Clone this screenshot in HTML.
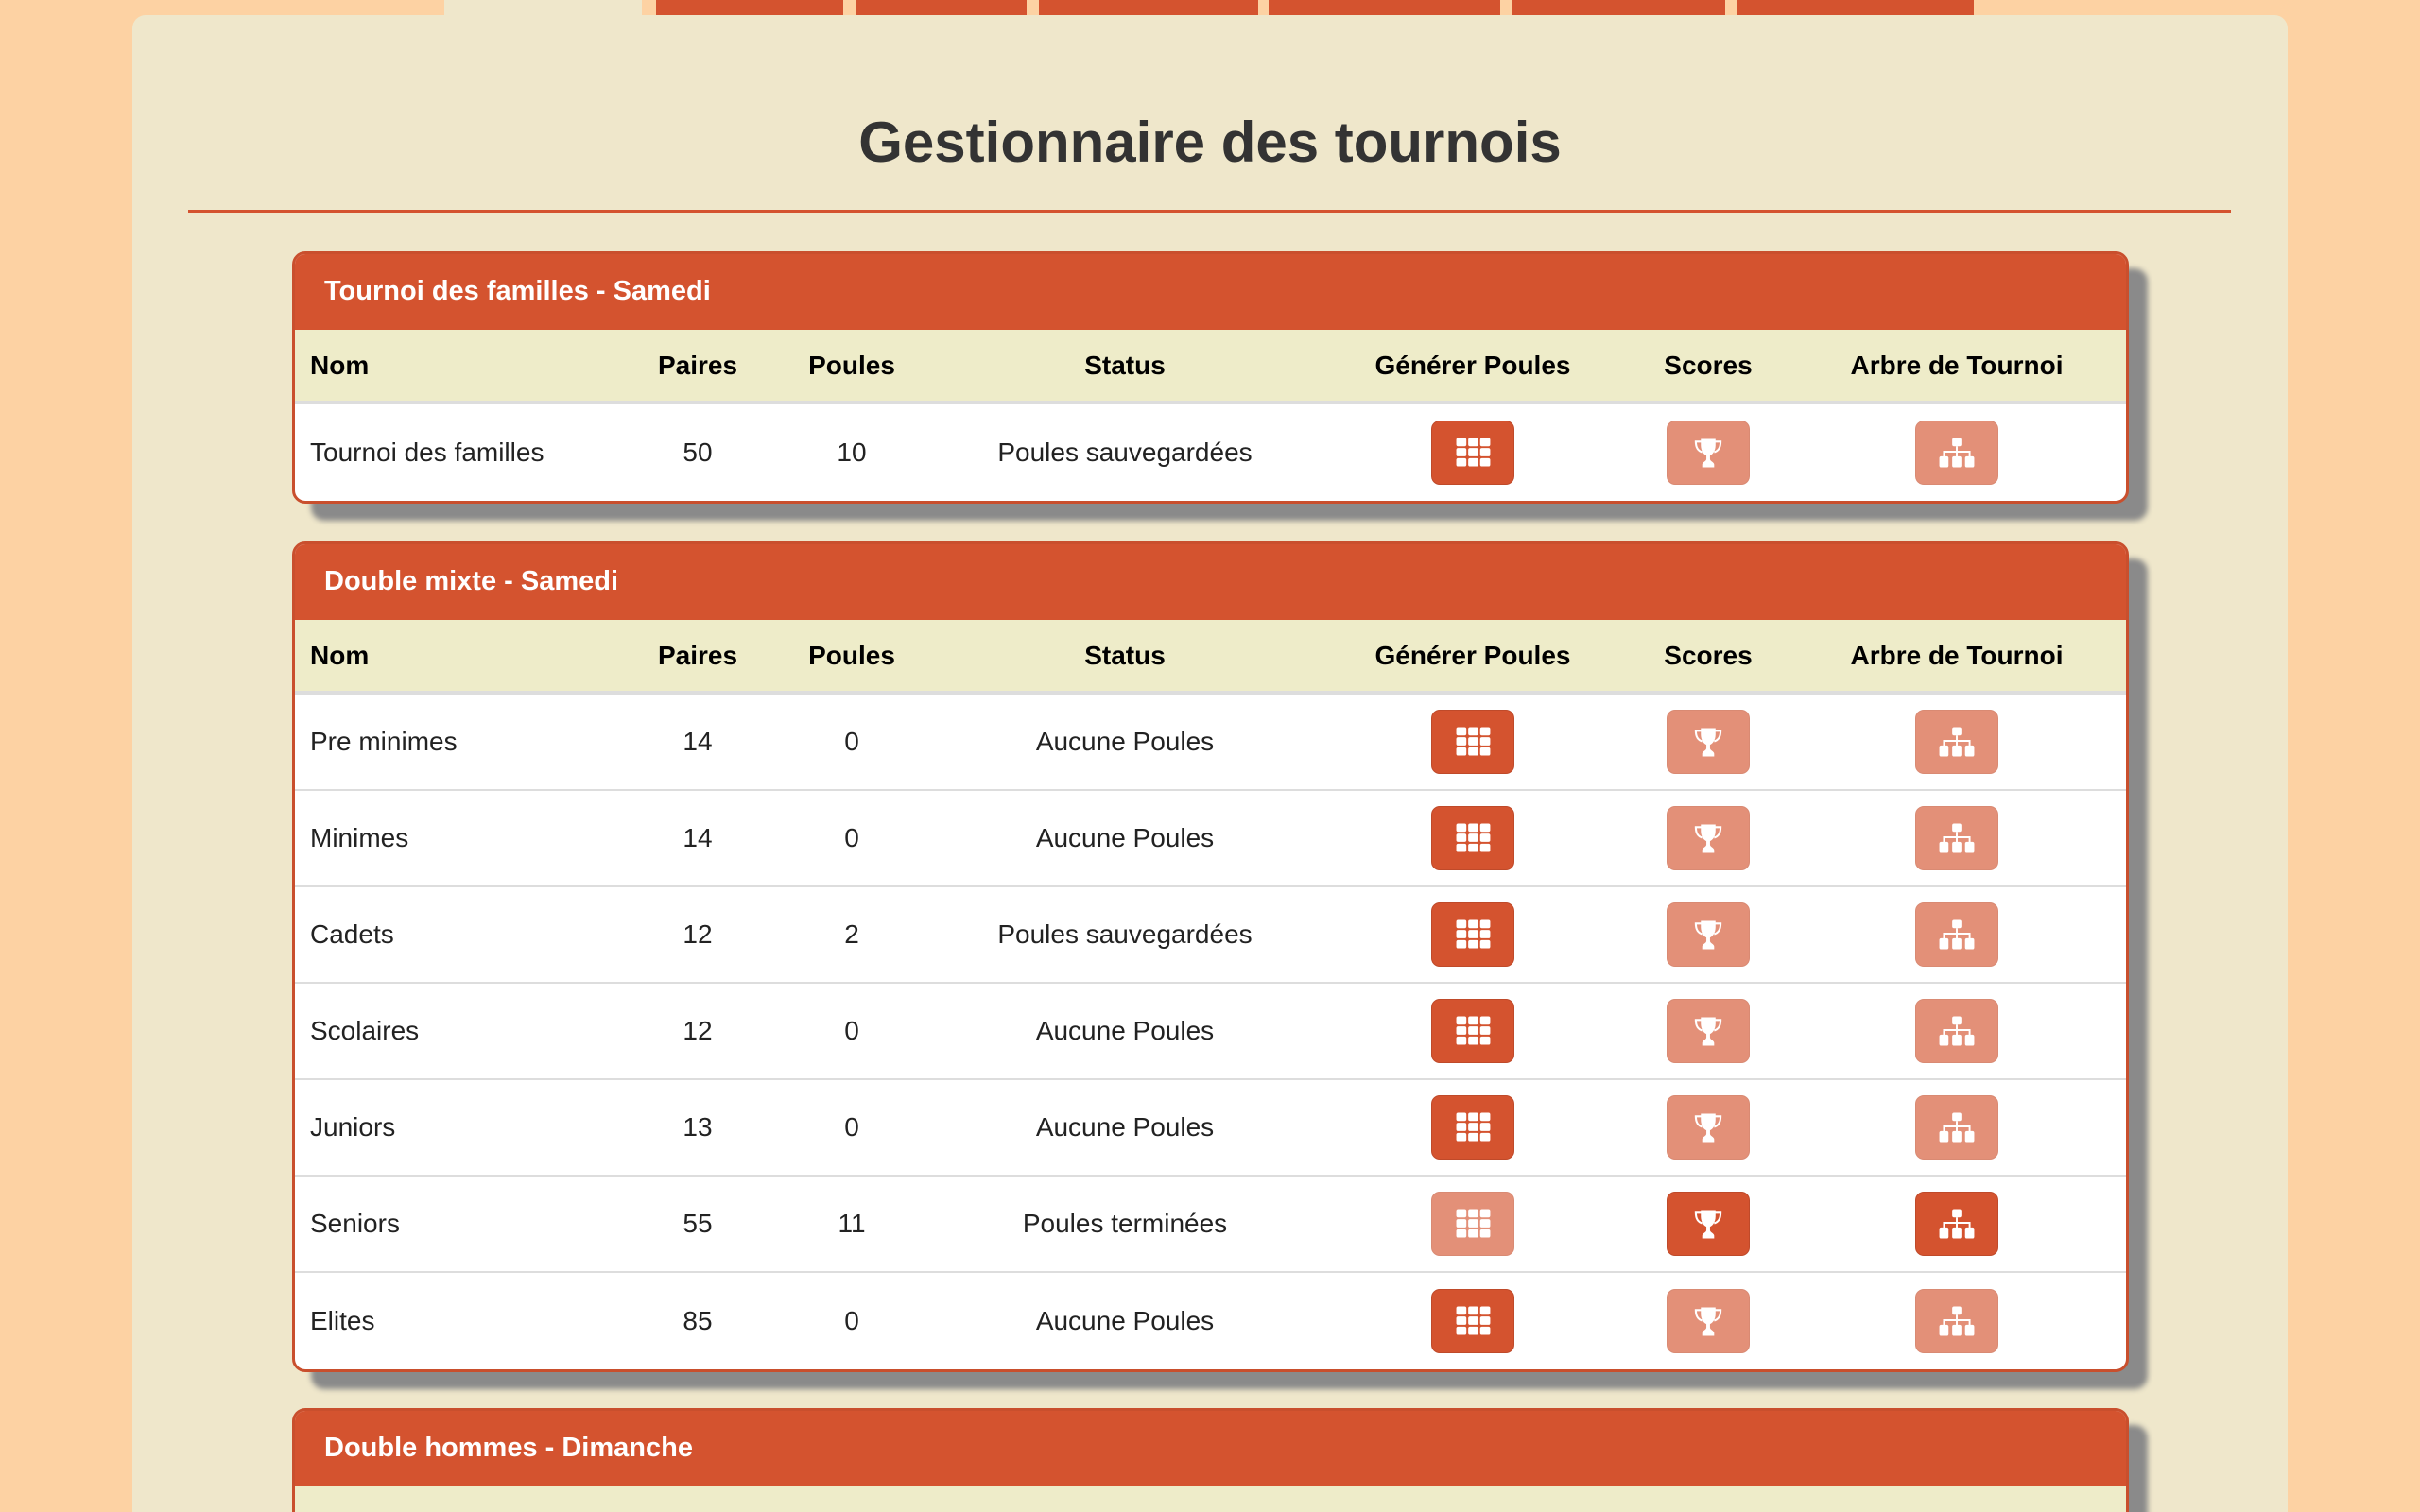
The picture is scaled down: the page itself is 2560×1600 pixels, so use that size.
<!DOCTYPE html>
<html><head><meta charset="utf-8">
<style>
*{box-sizing:border-box;margin:0;padding:0}
html,body{width:2560px;height:1600px;overflow:hidden}
body{background:#fdd2a3;font-family:"Liberation Sans",Arial,sans-serif;position:relative}
.tab{position:absolute;top:0;height:16px;background:#d4532f}
.container{position:absolute;left:140px;top:16px;width:2280px;height:1584px;background:#efe7cb;border-radius:14px 14px 0 0}
.bridge{position:absolute;left:470px;top:0;width:209px;height:20px;background:#efe7cb}
h1{position:absolute;left:0;width:2560px;top:116px;text-align:center;font-size:60px;font-weight:bold;color:#333}
.rule{position:absolute;left:199px;width:2161px;top:222px;height:3px;background:#d4532f}
.panel{position:absolute;left:309px;width:1943px;border:3px solid #c94f2d;border-radius:14px;background:#fff;box-shadow:20px 18px 6px #8a8a8a;overflow:hidden}
.ph{height:80px;background:#d4532f;color:#fff;font-weight:bold;font-size:29px;line-height:78px;padding-left:31px}
.row{display:flex;align-items:center;font-size:28px;color:#222}
.th{height:79px;background:#eeecc9;font-weight:bold;color:#000;border-bottom:4px solid #ddd}
.tr{height:102px;border-bottom:2px solid #ddd}
.tr:last-child{border-bottom:none}
.c{text-align:center;flex:none}
.c0{width:348px;text-align:left;padding-left:16px}
.c1{width:156px}.c2{width:170px}.c3{width:408px}.c4{width:328px}.c5{width:170px}.c6{width:356px}
.b{display:inline-block;width:88px;height:68px;border-radius:9px;vertical-align:middle;overflow:hidden}
.d{background:#d4532f;border:1px solid #bf4a2a}.l{background:#e39078;border:1px solid #d98a73}
.b svg{display:block;width:86px;height:66px}
</style></head><body>
<div class="tab" style="left:694px;width:198px"></div>
<div class="tab" style="left:905px;width:181px"></div>
<div class="tab" style="left:1099px;width:232px"></div>
<div class="tab" style="left:1342px;width:245px"></div>
<div class="tab" style="left:1600px;width:225px"></div>
<div class="tab" style="left:1838px;width:250px"></div>
<div class="container"></div>
<div class="bridge"></div>
<h1>Gestionnaire des tournois</h1>
<div class="rule"></div>

<svg width="0" height="0" style="position:absolute">
<defs>
<g id="grid" fill="#fff">
<rect x="26" y="18" width="11" height="9" rx="2"/><rect x="39" y="18" width="11" height="9" rx="2"/><rect x="52" y="18" width="11" height="9" rx="2"/>
<rect x="26" y="29" width="11" height="9" rx="2"/><rect x="39" y="29" width="11" height="9" rx="2"/><rect x="52" y="29" width="11" height="9" rx="2"/>
<rect x="26" y="40" width="11" height="9" rx="2"/><rect x="39" y="40" width="11" height="9" rx="2"/><rect x="52" y="40" width="11" height="9" rx="2"/>
</g>
<g id="troph">
<path fill="#fff" d="M36 19H52V26C52 33 48 37 44 38C40 37 36 33 36 26Z"/>
<path fill="none" stroke="#fff" stroke-width="2.2" d="M37 22H30.5C30.5 29 33 32 37.5 33.5M51 22H57.5C57.5 29 55 32 50.5 33.5"/>
<path fill="#fff" d="M42 37H46V41C46 43.5 50.5 44.5 50.5 47V50H37.5V47C37.5 44.5 42 43.5 42 41Z"/>
</g>
<g id="tree">
<rect fill="#fff" x="39" y="18" width="10" height="9" rx="2"/>
<path fill="none" stroke="#fff" stroke-width="2" d="M44 27V33M30 39V33H58V39M44 33V39"/>
<rect fill="#fff" x="25" y="38" width="10" height="12" rx="2"/>
<rect fill="#fff" x="39" y="38" width="10" height="12" rx="2"/>
<rect fill="#fff" x="53" y="38" width="10" height="12" rx="2"/>
</g>
</defs></svg>

<div class="panel" style="top:266px">
<div class="ph">Tournoi des familles - Samedi</div>
<div class="row th"><div class="c c0">Nom</div><div class="c c1">Paires</div><div class="c c2">Poules</div><div class="c c3">Status</div><div class="c c4">Générer Poules</div><div class="c c5">Scores</div><div class="c c6">Arbre de Tournoi</div></div>
<div class="row tr"><div class="c c0">Tournoi des familles</div><div class="c c1">50</div><div class="c c2">10</div><div class="c c3">Poules sauvegardées</div><div class="c c4"><span class="b d"><svg viewBox="0 0 88 68"><use href="#grid"/></svg></span></div><div class="c c5"><span class="b l"><svg viewBox="0 0 88 68"><use href="#troph"/></svg></span></div><div class="c c6"><span class="b l"><svg viewBox="0 0 88 68"><use href="#tree"/></svg></span></div></div>
</div>

<div class="panel" style="top:573px">
<div class="ph">Double mixte - Samedi</div>
<div class="row th"><div class="c c0">Nom</div><div class="c c1">Paires</div><div class="c c2">Poules</div><div class="c c3">Status</div><div class="c c4">Générer Poules</div><div class="c c5">Scores</div><div class="c c6">Arbre de Tournoi</div></div>
<div class="row tr"><div class="c c0">Pre minimes</div><div class="c c1">14</div><div class="c c2">0</div><div class="c c3">Aucune Poules</div><div class="c c4"><span class="b d"><svg viewBox="0 0 88 68"><use href="#grid"/></svg></span></div><div class="c c5"><span class="b l"><svg viewBox="0 0 88 68"><use href="#troph"/></svg></span></div><div class="c c6"><span class="b l"><svg viewBox="0 0 88 68"><use href="#tree"/></svg></span></div></div>
<div class="row tr"><div class="c c0">Minimes</div><div class="c c1">14</div><div class="c c2">0</div><div class="c c3">Aucune Poules</div><div class="c c4"><span class="b d"><svg viewBox="0 0 88 68"><use href="#grid"/></svg></span></div><div class="c c5"><span class="b l"><svg viewBox="0 0 88 68"><use href="#troph"/></svg></span></div><div class="c c6"><span class="b l"><svg viewBox="0 0 88 68"><use href="#tree"/></svg></span></div></div>
<div class="row tr"><div class="c c0">Cadets</div><div class="c c1">12</div><div class="c c2">2</div><div class="c c3">Poules sauvegardées</div><div class="c c4"><span class="b d"><svg viewBox="0 0 88 68"><use href="#grid"/></svg></span></div><div class="c c5"><span class="b l"><svg viewBox="0 0 88 68"><use href="#troph"/></svg></span></div><div class="c c6"><span class="b l"><svg viewBox="0 0 88 68"><use href="#tree"/></svg></span></div></div>
<div class="row tr"><div class="c c0">Scolaires</div><div class="c c1">12</div><div class="c c2">0</div><div class="c c3">Aucune Poules</div><div class="c c4"><span class="b d"><svg viewBox="0 0 88 68"><use href="#grid"/></svg></span></div><div class="c c5"><span class="b l"><svg viewBox="0 0 88 68"><use href="#troph"/></svg></span></div><div class="c c6"><span class="b l"><svg viewBox="0 0 88 68"><use href="#tree"/></svg></span></div></div>
<div class="row tr"><div class="c c0">Juniors</div><div class="c c1">13</div><div class="c c2">0</div><div class="c c3">Aucune Poules</div><div class="c c4"><span class="b d"><svg viewBox="0 0 88 68"><use href="#grid"/></svg></span></div><div class="c c5"><span class="b l"><svg viewBox="0 0 88 68"><use href="#troph"/></svg></span></div><div class="c c6"><span class="b l"><svg viewBox="0 0 88 68"><use href="#tree"/></svg></span></div></div>
<div class="row tr"><div class="c c0">Seniors</div><div class="c c1">55</div><div class="c c2">11</div><div class="c c3">Poules terminées</div><div class="c c4"><span class="b l"><svg viewBox="0 0 88 68"><use href="#grid"/></svg></span></div><div class="c c5"><span class="b d"><svg viewBox="0 0 88 68"><use href="#troph"/></svg></span></div><div class="c c6"><span class="b d"><svg viewBox="0 0 88 68"><use href="#tree"/></svg></span></div></div>
<div class="row tr"><div class="c c0">Elites</div><div class="c c1">85</div><div class="c c2">0</div><div class="c c3">Aucune Poules</div><div class="c c4"><span class="b d"><svg viewBox="0 0 88 68"><use href="#grid"/></svg></span></div><div class="c c5"><span class="b l"><svg viewBox="0 0 88 68"><use href="#troph"/></svg></span></div><div class="c c6"><span class="b l"><svg viewBox="0 0 88 68"><use href="#tree"/></svg></span></div></div>
</div>

<div class="panel" style="top:1490px;height:110px;border-bottom:none;border-radius:14px 14px 0 0">
<div class="ph">Double hommes - Dimanche</div>
<div style="height:30px;background:#eeecc9"></div>
</div>
</body></html>
